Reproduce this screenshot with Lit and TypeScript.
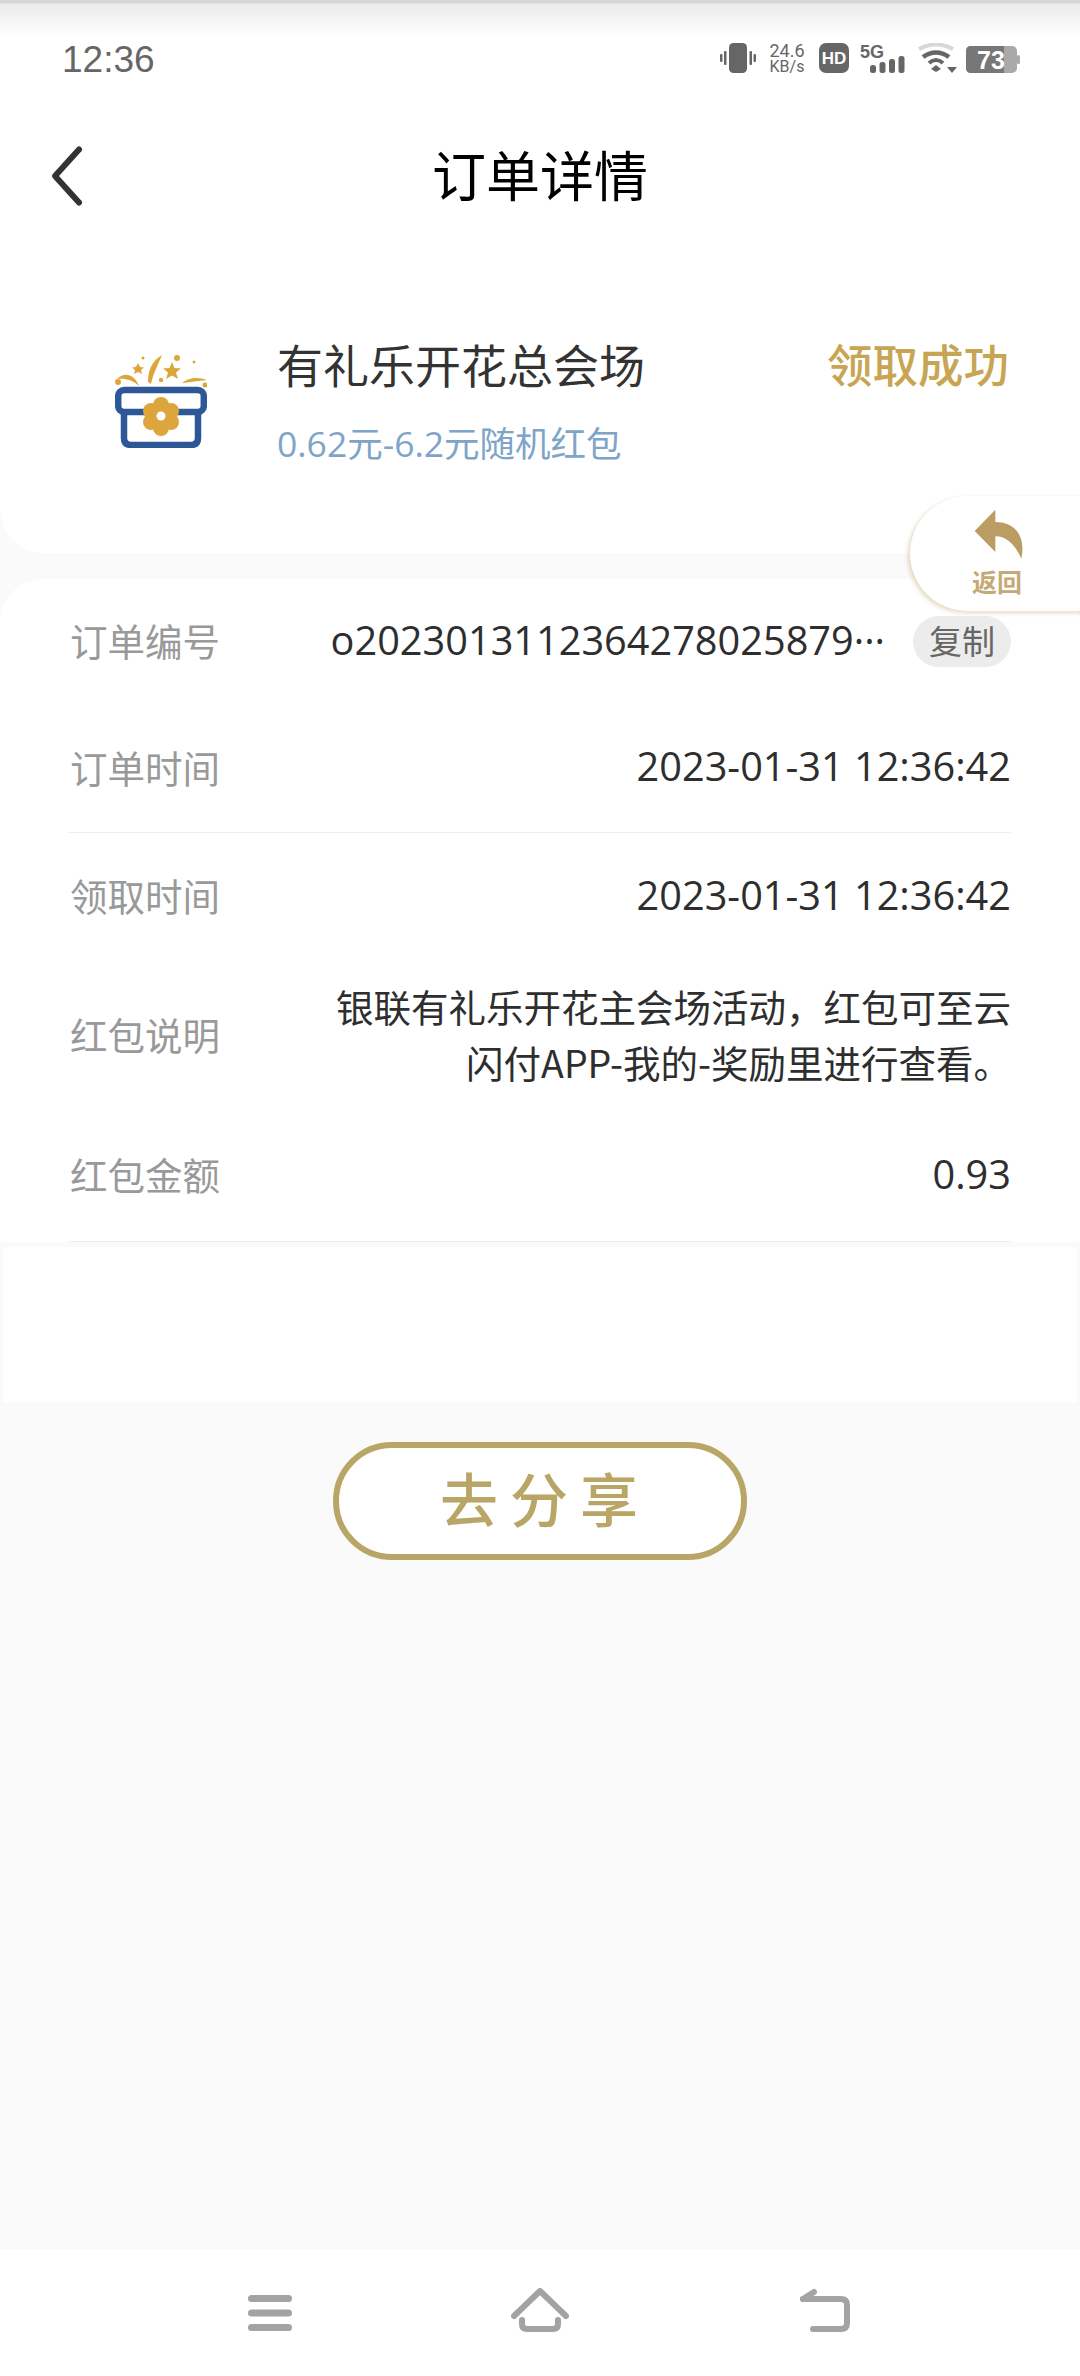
import { LitElement, html, css } from "lit";
import { customElement } from "lit/decorators.js";

const gift = html`<svg class="gift" viewBox="0 0 92 93" width="92" height="93">
  <g fill="#dca63c">
    <path d="M2 24C10 16 20 20 24 31C18 25 10 23 2 24Z"/>
    <path d="M33 27C33 15 37 6 47 0C44 8 39 16 36 29Z"/>
    <path d="M67 28C74 22 84 22 92 25C82 26 76 27 67 28Z"/>
    <circle cx="3" cy="27" r="3"/><circle cx="46" cy="25" r="2.2"/><circle cx="62" cy="3" r="3"/>
    <circle cx="90" cy="30" r="2.5"/><circle cx="28" cy="3" r="1.5"/><circle cx="79" cy="7" r="1.5"/>
    <path d="M23 8L25 12L29 12.500L26 15L27 19L23 17L19 19L20 15L17 12.500L21 12Z"/>
    <path d="M57 7L59.500 13L66 13.500L61 17.500L63 24L57 20.500L51 24L53 17.500L48 13.500L54.500 13Z"/>
  </g>
  <g fill="none" stroke="#2d5796" stroke-width="6.500" stroke-linejoin="round">
    <rect x="3.200" y="35" width="85.600" height="22" rx="6"/>
    <path d="M9 57V83Q9 90 16 90H76Q83 90 83 83V57"/>
  </g>
  <g fill="#dca63c">
    <circle cx="46" cy="50" r="8"/><circle cx="46" cy="73" r="8"/><circle cx="36" cy="56" r="8"/>
    <circle cx="56" cy="56" r="8"/><circle cx="36" cy="67" r="8"/><circle cx="56" cy="67" r="8"/><circle cx="46" cy="61" r="10"/>
  </g>
  <circle cx="46" cy="61" r="4.500" fill="#fff"/>
</svg>`;

@customElement("app-root")
export class AppRoot extends LitElement {
  static styles = css`
    :host { display: block; font-family: "Noto Sans CJK SC", "Noto Sans", sans-serif; }
    .page { position: relative; width: 1080px; height: 2376px; background: #fafafa; display: flex; flex-direction: column; overflow: hidden; }
    .status { height: 88px; flex: none; padding: 43px 60px 0 62px; box-sizing: border-box; display: flex; justify-content: space-between; align-items: flex-start;
      background: linear-gradient(#d6d6d6 0, #d6d6d6 3px, #ebebeb 4px, #fff 38px); }
    .time { font: 37px/33px "Liberation Sans", sans-serif; color: #666; }
    .icons { display: flex; align-items: flex-start; height: 30px; }
    .icons svg { display: block; flex: none; }
    .speed { width: 38px; margin: 0 13px 0 12px; display: flex; flex-direction: column; align-items: center; color: #666; font-family: Roboto, sans-serif; }
    .speed span:first-child { font-size: 18px; line-height: 16px; }
    .speed span:last-child { font-size: 16px; line-height: 15px; }
    .sg { margin: 0 12px 0 11px; }
    .wf { margin-right: 9px; }
    .bat { margin-top: 3px; }
    .head { height: 176px; flex: none; background: #fff; position: relative; display: flex; align-items: center; justify-content: center; }
    .head h1 { margin: 0 0 4px; font-size: 54px; font-weight: 400; color: #000; line-height: 1; }
    .back { position: absolute; left: 48px; top: 55px; }
    .summary { height: 289px; flex: none; box-sizing: border-box; background: #fff; border-radius: 0 0 44px 44px; padding: 69px 71px 0 115px; display: flex; align-items: flex-start; }
    .gift { margin-top: 22px; flex: none; display: block; }
    .sum-text { margin-left: 70px; flex: 1; }
    .sum-title { font-size: 46px; line-height: 60px; color: #333; font-weight: 400; }
    .sum-sub { font-size: 35.500px; line-height: 50px; color: #7ea4c8; margin-top: 25px; font-family: "Open Sans", "Noto Sans CJK SC", sans-serif; }
    .state { font-size: 45.500px; line-height: 60px; color: #c8a552; font-weight: 500; }
    .card { margin-top: 26px; flex: none; background: #fff; border-radius: 44px 44px 0 0; padding: 0 69px 0 68px; }
    .row { display: flex; align-items: center; justify-content: space-between; color: #2e2e2e; font-size: 39.700px; font-family: "Open Sans", "Noto Sans CJK SC", sans-serif; box-sizing: border-box; padding-bottom: 5px; }
    .row .label { color: #999; font-size: 37.500px; font-family: "Noto Sans CJK SC", sans-serif; margin-left: 2px; flex: none; }
    .r1 { height: 126px; }
    .r2 { height: 128px; border-bottom: 1px solid #eeeeee; }
    .r3 { height: 128px; }
    .r4 { height: 150px; }
    .r5 { height: 130px; }
    .end { height: 1px; margin: 0; background: #eee; }
    .val { text-align: right; }
    .desc { line-height: 56px; font-size: 37.500px; font-family: "Noto Sans CJK SC", sans-serif; }
    .order { display: flex; align-items: center; }
    .chip { margin: 4px 0 0 28px; width: 98px; height: 51px; border-radius: 26px; background: #ececec; color: #666; font-size: 33px; line-height: 49px; text-align: center; font-family: "Noto Sans CJK SC", sans-serif; }
    .blank { margin: 5px 3px 0; height: 155px; background: #fff; flex: none; }
    .share-wrap { display: flex; justify-content: center; margin-top: 40px; flex: none; }
    .share { width: 414px; height: 118px; box-sizing: border-box; border: 6px solid #b9a566; border-radius: 59px; background: #fff; color: #b9a566; font-size: 58px; font-weight: 500; line-height: 99px; letter-spacing: 12px; text-align: center; padding-left: 10px; }
    .grow { flex: 1; }
    .nav { height: 127px; flex: none; background: #fff; position: relative; display: flex; padding: 46px 0 0 248px; box-sizing: border-box; align-items: flex-start; }
    .nav svg { display: block; flex: none; }
    .nav .home { margin: -7px 0 0 219px; }
    .nav .ret { margin: -7px 0 0 231px; }
    .float { position: absolute; left: 910px; top: 496px; width: 190px; height: 115px; background: #fff; border-radius: 58px 0 0 58px; box-shadow: -2px 2px 4px rgba(190,160,100,.4); display: flex; flex-direction: column; align-items: flex-start; padding-left: 62px; box-sizing: border-box; }
    .float svg { margin-top: 11px; display: block; }
    .float span { font-size: 25px; font-weight: 700; line-height: 30px; color: #c4aa76; margin-top: 4px; width: 52px; white-space: nowrap; }
  `;

  render() {
    return html`<div class="page">
      <div class="status">
        <div class="time">12:36</div>
        <div class="icons">
          <svg width="36" height="30" viewBox="0 0 36 30" fill="#666"><rect x="9" y="0" width="18" height="30" rx="4.500"/><rect x="4" y="8" width="2.500" height="14" rx="1"/><rect x="0" y="11" width="2.500" height="8" rx="1"/><rect x="29.500" y="8" width="2.500" height="14" rx="1"/><rect x="33.500" y="11" width="2.500" height="8" rx="1"/></svg>
          <div class="speed"><span>24.6</span><span>KB/s</span></div>
          <svg width="30" height="30" viewBox="0 0 30 30"><rect width="30" height="30" rx="7" fill="#666"/><text x="15" y="21" text-anchor="middle" font-size="17" font-weight="700" font-family="Liberation Sans" fill="#fff">HD</text></svg>
          <svg class="sg" width="45" height="30" viewBox="0 0 45 30" fill="#666"><text x="0" y="15" font-size="18" font-weight="700" font-family="Liberation Sans">5G</text><rect x="10" y="22" width="6" height="8" rx="2.500"/><rect x="19.500" y="19" width="6" height="11" rx="2.500"/><rect x="29" y="16" width="6" height="14" rx="2.500"/><rect x="38.500" y="13" width="6" height="17" rx="2.500"/></svg>
          <svg class="wf" width="40" height="30" viewBox="0 0 40 30" fill="none"><path d="M2 6Q19 -3 36 6" stroke="#d8d8d8" stroke-width="4"/><path d="M6 14Q19 5 32 14" stroke="#666" stroke-width="4.500"/><path d="M12 20Q19 14 26 20" stroke="#666" stroke-width="4"/><path d="M14 26L19 22L24 26L19 29Z" fill="#666"/><path d="M30 24H40L35 30Z" fill="#666"/></svg>
          <svg class="bat" width="54" height="27" viewBox="0 0 54 27"><rect x="0" y="0" width="51" height="27" rx="5" fill="#a9a9a9"/><path d="M5 0H38V27H5Q0 27 0 22V5Q0 0 5 0Z" fill="#777"/><rect x="51" y="9" width="3" height="9" rx="1.500" fill="#a9a9a9"/><text x="25" y="22.500" text-anchor="middle" font-size="25" font-weight="700" font-family="Liberation Sans" fill="#fff">73</text></svg>
        </div>
      </div>
      <div class="head">
        <svg class="back" width="40" height="66" viewBox="0 0 40 66" fill="none"><path d="M31 6.500L7 33L31 59.500" stroke="#333" stroke-width="6" stroke-linecap="round" stroke-linejoin="round"/></svg>
        <h1>订单详情</h1>
      </div>
      <div class="summary">
        ${gift}
        <div class="sum-text">
          <div class="sum-title">有礼乐开花总会场</div>
          <div class="sum-sub">0.62元-6.2元随机红包</div>
        </div>
        <div class="state">领取成功</div>
      </div>
      <div class="card">
        <div class="row r1"><div class="label">订单编号</div><div class="order"><span>o2023013112364278025879···</span><div class="chip">复制</div></div></div>
        <div class="row r2"><div class="label">订单时间</div><div class="val">2023-01-31 12:36:42</div></div>
        <div class="row r3"><div class="label">领取时间</div><div class="val">2023-01-31 12:36:42</div></div>
        <div class="row r4"><div class="label">红包说明</div><div class="val desc">银联有礼乐开花主会场活动，红包可至云<br />闪付APP-我的-奖励里进行查看。</div></div>
        <div class="row r5"><div class="label">红包金额</div><div class="val">0.93</div></div>
        <div class="end"></div>
      </div>
      <div class="blank"></div>
      <div class="share-wrap"><div class="share">去分享</div></div>
      <div class="grow"></div>
      <div class="nav">
        <svg width="44" height="36" viewBox="0 0 44 36" fill="#a3a3a3"><rect y="0" width="44" height="7" rx="3.500"/><rect y="14.500" width="44" height="7" rx="3.500"/><rect y="29" width="44" height="7" rx="3.500"/></svg>
        <svg class="home" width="58" height="44" viewBox="0 0 58 44" fill="none" stroke="#a3a3a3" stroke-width="6" stroke-linecap="round" stroke-linejoin="round"><path d="M3 28L29 3L55 28"/><path d="M11 32V36Q11 41 16 41H42Q47 41 47 36V32"/></svg>
        <svg class="ret" width="50" height="44" viewBox="0 0 50 44" fill="none" stroke="#a3a3a3" stroke-width="6" stroke-linecap="round" stroke-linejoin="round"><path d="M3 11L14 4"/><path d="M3 11H41Q47 11 47 17V35Q47 41 41 41H13"/></svg>
      </div>
      <div class="float">
        <svg width="55" height="55" viewBox="570 620 165 165" fill="#bb9d63"><path d="M640 628L578 692L640 755V708C675 708 700 735 718 775C730 720 710 665 640 665Z"/></svg>
        <span>返回</span>
      </div>
    </div>`;
  }
}
